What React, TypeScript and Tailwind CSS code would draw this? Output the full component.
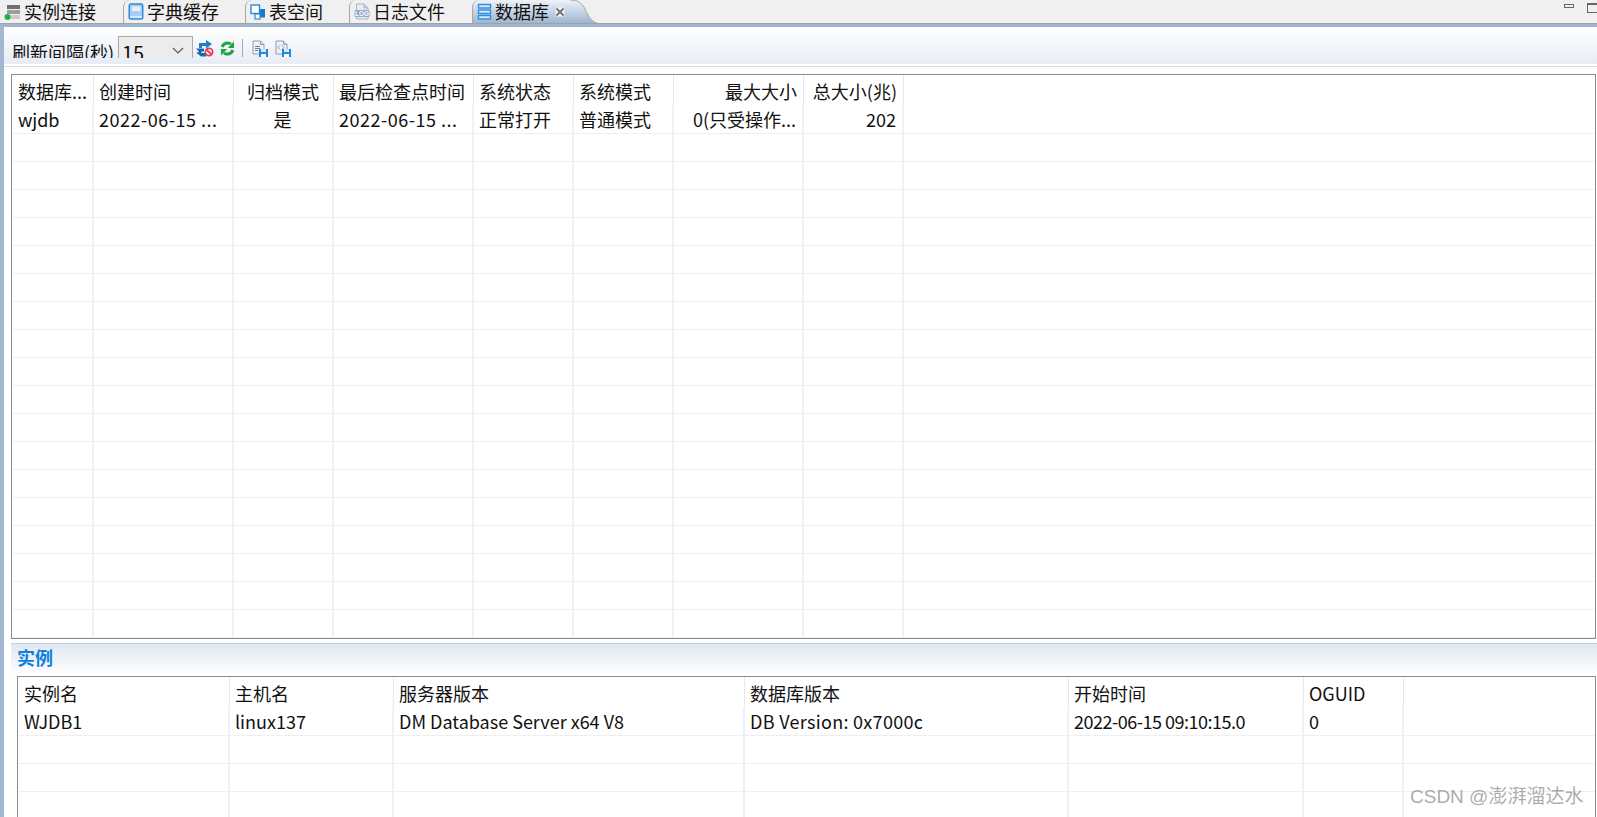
const cjk = "font-['Microsoft_YaHei','Noto_Sans_CJK_SC','Noto_Sans',sans-serif]";

type Col = { title: string; value: string; width: string; align?: string; valueClass?: string };

const topCols: Col[] = [
  { title: '数据库...', value: 'wjdb', width: 'w-[82px]' },
  { title: '创建时间', value: '2022-06-15 ...', width: 'w-[140px]', valueClass: 'tracking-[0.5px]' },
  { title: '归档模式', value: '是', width: 'w-[100px]', align: 'text-center' },
  { title: '最后检查点时间', value: '2022-06-15 ...', width: 'w-[140px]', valueClass: 'tracking-[0.5px]' },
  { title: '系统状态', value: '正常打开', width: 'w-[100px]' },
  { title: '系统模式', value: '普通模式', width: 'w-[100px]' },
  { title: '最大大小', value: '0(只受操作...', width: 'w-[130px]', align: 'text-right' },
  { title: '总大小(兆)', value: '202', width: 'w-[100px]', align: 'text-right' },
];

const bottomCols: Col[] = [
  { title: '实例名', value: 'WJDB1', width: 'w-[212px]' },
  { title: '主机名', value: 'linux137', width: 'w-[164px]' },
  { title: '服务器版本', value: 'DM Database Server x64 V8', width: 'w-[351px]' },
  { title: '数据库版本', value: 'DB Version: 0x7000c', width: 'w-[324px]', valueClass: 'tracking-[0.3px]' },
  { title: '开始时间', value: '2022-06-15 09:10:15.0', width: 'w-[235px]', valueClass: 'tracking-[-0.5px]' },
  { title: 'OGUID', value: '0', width: 'w-[100px]' },
];

function DataTable({ cols, rows }: { cols: Col[]; rows: number }) {
  return (
    <div className="flex-1 min-h-0 overflow-hidden">
      <div className="flex h-[31px]">
        {cols.map((c) => (
          <div
            key={c.title}
            className={`${c.width} ${c.align ?? ''} shrink-0 border-r border-[#e9e9e9] pl-[5px] first:pl-[6px] pr-[6px] pt-[3px] text-[18px] leading-[26px] whitespace-nowrap overflow-hidden`}
          >
            {c.title}
          </div>
        ))}
      </div>
      {Array.from({ length: rows }).map((_, r) => (
        <div key={r} className="flex h-[28px] border-b border-[#efefef]">
          {cols.map((c) => (
            <div
              key={c.title}
              className={`${c.width} ${c.align ?? ''} ${c.valueClass ?? ''} shrink-0 border-r-2 border-[#edf1f9] pl-[5px] first:pl-[6px] pr-[6px] text-[18px] leading-[26px] whitespace-nowrap overflow-hidden`}
            >
              {r === 0 ? c.value : ''}
            </div>
          ))}
          <div className="flex-1" />
        </div>
      ))}
    </div>
  );
}

function Tab({ label, icon, width }: { label: string; icon: React.ReactNode; width: string }) {
  return (
    <div className={`${width} h-[23px] shrink-0 flex items-center gap-[3px] first:gap-[4px] pl-[4px] border-l first:border-l-0 border-[#a8a8a8] rounded-tl-[7px] text-[18px] leading-[23px] whitespace-nowrap`}>
      {icon}
      <span>{label}</span>
    </div>
  );
}

const ConnIcon = () => (
  <svg width="16" height="17" viewBox="0 0 16 17" className="shrink-0">
    <rect x="3" y="2" width="13" height="4" fill="#6e6e6e" />
    <rect x="3" y="7" width="13" height="4" fill="#9c9c9c" />
    <rect x="3" y="12" width="13" height="4" fill="#cacaca" />
    <circle cx="3.5" cy="14" r="3" fill="#22b04a" />
  </svg>
);

const BookIcon = () => (
  <svg width="16" height="17" viewBox="0 0 16 17" className="shrink-0">
    <rect x="1.2" y="1" width="13.5" height="15" rx="1.5" fill="#a9cdf2" stroke="#2f8bdf" strokeWidth="1.5" />
    <rect x="4" y="3.5" width="8.5" height="4.5" fill="#e6f1fc" />
    <rect x="2" y="13" width="12" height="2" fill="#d6e8f8" />
  </svg>
);

const SpaceIcon = () => (
  <svg width="16" height="16" viewBox="0 0 16 16" className="shrink-0">
    <rect x="6" y="5" width="9" height="8.5" fill="#1f78c8" />
    <rect x="1" y="1" width="8.5" height="8.5" fill="#fff" stroke="#2c8adc" strokeWidth="1.4" />
    <rect x="5" y="10" width="5" height="5" fill="#fff" stroke="#2c8adc" strokeWidth="1.2" />
  </svg>
);

const LogIcon = () => (
  <svg width="16" height="17" viewBox="0 0 16 17" className="shrink-0">
    <path d="M2.5 1H10l4 4v11H2.5z" fill="#e9edf3" stroke="#a9b5c8" />
    <path d="M10 1v4h4" fill="#c3cddb" stroke="#a9b5c8" />
    <rect x="0.5" y="7" width="15" height="7" rx="1" fill="#93a9c6" />
    <text x="8" y="13" textAnchor="middle" fontSize="6.5" fontWeight="700" fill="#fff" fontFamily="Liberation Sans, sans-serif">LOG</text>
  </svg>
);

const DbIcon = () => (
  <svg width="16" height="17" viewBox="0 0 16 17" className="shrink-0">
    <rect x="1.5" y="1.5" width="12" height="3.5" fill="#d4e6f8" stroke="#2f8bdf" strokeWidth="1.4" />
    <rect x="1.5" y="7" width="12" height="3.5" fill="#d4e6f8" stroke="#2f8bdf" strokeWidth="1.4" />
    <rect x="1.5" y="12.5" width="12" height="3.5" fill="#d4e6f8" stroke="#2f8bdf" strokeWidth="1.4" />
  </svg>
);

const CloseIcon = () => (
  <svg width="12" height="12" viewBox="0 0 12 12" className="shrink-0">
    <path d="M2.5 2.5l7 7M9.5 2.5l-7 7" stroke="#fff" strokeWidth="4.6" />
    <path d="M2.5 2.5l7 7M9.5 2.5l-7 7" stroke="#7a7a7a" strokeWidth="2.4" />
  </svg>
);

const StopRefreshIcon = () => (
  <svg width="18" height="17" viewBox="0 0 18 17" className="shrink-0">
    <path d="M3 8V3h7V0l6 4-6 4.5V6H6v2z" fill="#1c7fd0" />
    <path d="M0 8.5h8v3H5.5V13H10v3.5H5L0 12.5h2.5V11z" fill="#1668b0" />
    <circle cx="13" cy="12" r="3.6" fill="#fff" stroke="#e23f4c" strokeWidth="1.8" />
    <path d="M10.5 9.5l5 5" stroke="#e23f4c" strokeWidth="1.8" />
  </svg>
);

const RefreshIcon = () => (
  <svg width="15" height="15" viewBox="0 0 15 15" className="shrink-0">
    <path d="M2.2 6A5.5 5.5 0 0 1 11 3.2" fill="none" stroke="#1ea53f" strokeWidth="3" />
    <path d="M14 0.5V7H7.8z" fill="#1ea53f" />
    <path d="M12.8 9A5.5 5.5 0 0 1 4 11.8" fill="none" stroke="#1ea53f" strokeWidth="3" />
    <path d="M1 14.5V8h6.2z" fill="#1ea53f" />
  </svg>
);

const SaveDocIcon = ({ dim }: { dim?: boolean }) => (
  <svg width="16" height="17" viewBox="0 0 16 17" className="shrink-0">
    <path d="M1 1h7.5L12 4.5V14H1z" fill="#eef1f6" stroke="#8f9db2" />
    <path d="M8.5 1v3.5H12" fill="#cfd7e3" stroke="#8f9db2" />
    {dim ? (
      <path d="M5 5.5L3 7.5l2 2M7 5.5l2 2-2 2" stroke="#8a97ab" strokeWidth="1" fill="none" />
    ) : (
      <path d="M3 6.5h5M3 8.5h5M3 10.5h3" stroke="#6f7d92" strokeWidth="1" />
    )}
    <path d="M7 9h9v8H7z" fill="#1f88e0" />
    <rect x="9" y="9" width="5" height="3" fill="#d6e8f8" />
    <rect x="9" y="14" width="5" height="3" fill="#fff" />
  </svg>
);

export default function App() {
  return (
    <div className={`${cjk} w-[1597px] h-[817px] overflow-hidden relative bg-white text-[#111] flex flex-col`}>
      {/* editor tabs */}
      <div className="h-[23px] shrink-0 bg-[#f0f0f0] flex">
        <Tab label="实例连接" icon={<ConnIcon />} width="w-[123px]" />
        <Tab label="字典缓存" icon={<BookIcon />} width="w-[122px]" />
        <Tab label="表空间" icon={<SpaceIcon />} width="w-[104px]" />
        <Tab label="日志文件" icon={<LogIcon />} width="w-[123px]" />
        <div className="h-[23px] w-[98px] shrink-0 flex items-center gap-[2px] pl-[4px] border-l border-[#a8a8a8] rounded-tl-[7px] bg-gradient-to-b from-[#eef3f8] to-[#9fb5d2] text-[18px] leading-[23px]">
          <DbIcon />
          <span>数据库</span>
          <span className="ml-[3px]">
            <CloseIcon />
          </span>
        </div>
        <svg width="27" height="23" viewBox="0 0 27 23" className="shrink-0">
          <defs>
            <linearGradient id="activeTab" x1="0" y1="0" x2="0" y2="1">
              <stop offset="0" stopColor="#eef3f8" />
              <stop offset="1" stopColor="#9fb5d2" />
            </linearGradient>
          </defs>
          <path d="M0 0C8 0 12 3 15 9C18 16 22 22 27 23H0Z" fill="url(#activeTab)" />
          <path d="M0 0C8 0 12 3 15 9C18 16 22 22 27 23" fill="none" stroke="#a8a8a8" />
        </svg>
        <div className="flex-1 flex justify-end items-start pt-[4px] gap-[13px]">
          <div className="w-[10px] h-[4px] border border-[#666]" />
          <div className="w-[10px] h-[10px] border border-[#666] border-r-0 -mt-[1px] border-t-2" />
        </div>
      </div>
      <div className="h-[4px] shrink-0 bg-[#9fb5d2] border-t border-[#a3a3a3]" />

      <div className="flex-1 min-h-0 flex border-l-[4px] border-[#a3b6d2]">
        <div className="flex-1 min-w-0 flex flex-col">
          {/* toolbar */}
          <div className="h-[37px] shrink-0 bg-gradient-to-b from-white to-[#e7ecf5] flex items-start pt-[9px] pl-[8px]">
            <div className="flex items-start h-[22px] overflow-hidden">
              <span className="mt-[4px] w-[106px] shrink-0 text-[18px] leading-[24px] whitespace-nowrap">刷新间隔(秒)</span>
              <div className="w-[75px] h-[30px] shrink-0 bg-[#ececec] border border-[#a9a9a9] flex justify-between pl-[3px] pr-[8px]">
                <span className="text-[20px] leading-[30px] mt-[1px]">15</span>
                <svg width="12" height="8" viewBox="0 0 12 8" className="mt-[10px]">
                  <path d="M1 1l5 5 5-5" fill="none" stroke="#555" strokeWidth="1.1" />
                </svg>
              </div>
            </div>
            <div className="flex items-center mt-[3px] ml-[3px]">
              <StopRefreshIcon />
              <span className="ml-[6px]">
                <RefreshIcon />
              </span>
              <div className="w-px h-[18px] bg-[#a9a9a9] ml-[7px]" />
              <span className="ml-[9px]">
                <SaveDocIcon />
              </span>
              <span className="ml-[7px]">
                <SaveDocIcon dim />
              </span>
            </div>
          </div>
          <div className="h-[2px] shrink-0 bg-white" />
          <div className="h-px shrink-0 bg-[#cfdcec]" />

          {/* database table */}
          <div className="h-[565px] shrink-0 mt-[7px] ml-[7px] mr-[1px] border border-[#8b8b93] flex">
            <DataTable cols={topCols} rows={19} />
          </div>

          {/* instance section */}
          <div className="mt-[4px] ml-[7px] flex-1 min-h-0 flex flex-col">
            <div className="h-[33px] shrink-0 border-t border-[#bcd0e6] bg-gradient-to-b from-[#e1e8f2] to-white pl-[6px] text-[18px] leading-[26px] font-bold text-[#0f7fe0]">
              实例
            </div>
            <div className="flex-1 min-h-0 ml-[6px] mr-[1px] border border-b-0 border-[#8b8b93] flex">
              <DataTable cols={bottomCols} rows={4} />
            </div>
          </div>
        </div>
      </div>

      <div className="absolute left-[1410px] top-[785px] text-[19px] leading-[24px] text-[#8f8f8f]/75 font-['Liberation_Sans','Noto_Sans_CJK_SC',sans-serif] whitespace-nowrap">
        CSDN @澎湃溜达水
      </div>
    </div>
  );
}
